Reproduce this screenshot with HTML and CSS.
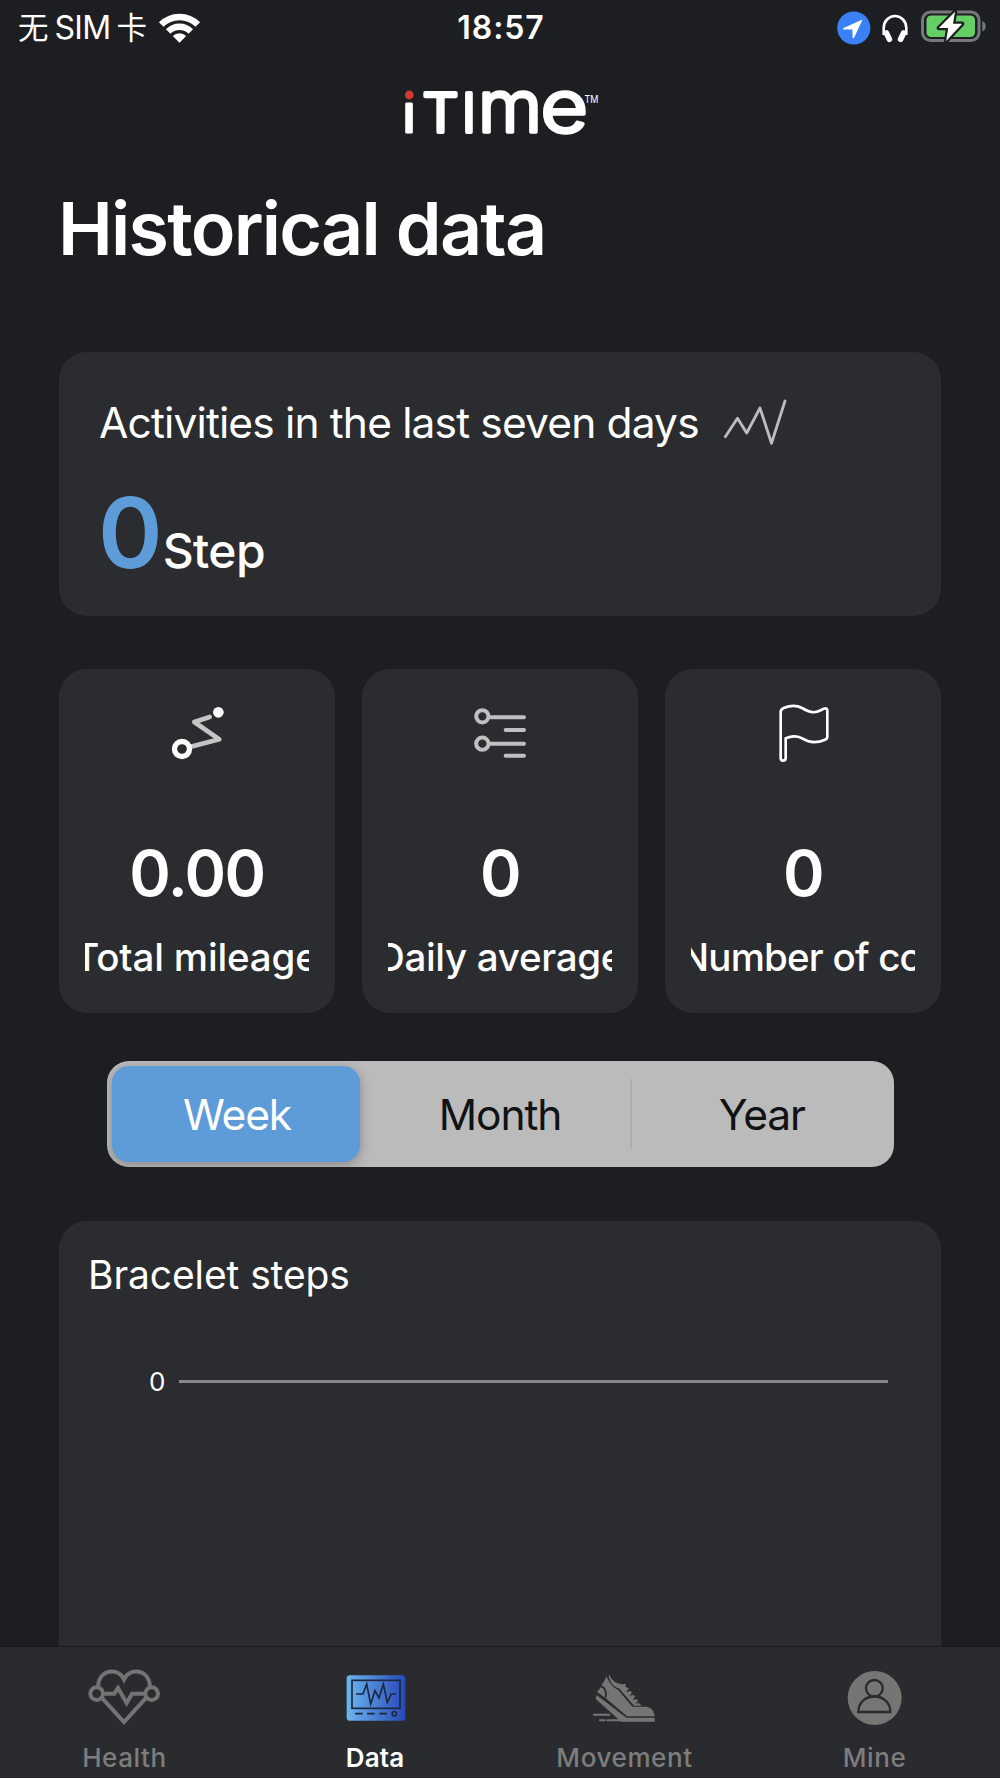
FILE: index.html
```html
<!DOCTYPE html>
<html lang="en">
<head>
<meta charset="utf-8">
<title>Historical data</title>
<link rel="stylesheet" href="styles.css">
</head>
<body>
<header class="status">
  <div class="status-left">
    <span class="carrier"><span class="cjk">无</span><span class="sim">SIM</span><span class="cjk">卡</span></span>
    <svg width="44" height="34" viewBox="157 10 44 34" fill="none" stroke="#fff" stroke-width="6.4">
      <path d="M161.2 23.6A25.8 25.8 0 0 1 197.8 23.6"/>
      <path d="M168.2 30.4A16 16 0 0 1 190.8 30.4"/>
      <path d="M179.5 41.8L172.8 35A9.6 9.6 0 0 1 186.2 35Z" fill="#fff" stroke="none"/>
    </svg>
  </div>
  <span class="time">18:57</span>
  <svg class="status-icons" width="150" height="40" viewBox="836 8 150 40">
    <circle cx="853.8" cy="28" r="16.6" fill="#3a81f6"/>
    <path d="M862.6 19.6L843 28.2Q842.6 29.4 844 29.5L852.4 29.6L852.6 37.8Q853.2 39 854.2 37.6Z" fill="#fff"/>
    <path d="M883.7 35V28A11.3 12 0 0 1 906.3 28V35" fill="none" stroke="#fff" stroke-width="2.6"/>
    <path d="M886.4 33L889.4 39.3M903.6 33L900.6 39.3" stroke="#fff" stroke-width="5.6" stroke-linecap="round"/>
    <rect x="922.5" y="12" width="56.5" height="28.5" rx="8" fill="none" stroke="#77787b" stroke-width="3"/>
    <rect x="926.5" y="15.5" width="48.5" height="21.5" rx="4.5" fill="#65cf66"/>
    <path d="M982.3 21Q985.6 22.5 985.6 26.2T982.3 31.4Z" fill="#77787b"/>
    <path d="M955 11.8L938.8 28H948.2L946.2 41L962.2 23.8H953Z" fill="#fff" stroke="#1d1e21" stroke-width="4.5" stroke-linejoin="round" paint-order="stroke"/>
  </svg>
</header>
<div class="brand">
  <svg width="200" height="56" viewBox="402 86 200 56" class="logo">
    <text x="402.7" y="132.3" font-size="52" font-weight="400" stroke-width="3">i</text>
    <circle cx="409.3" cy="95" r="6.5" fill="#1d1e21"/>
    <circle cx="409.3" cy="95" r="4.4" fill="#d23a30"/>
    <text x="422.5" y="132" font-size="53" font-weight="300" stroke-width="4" textLength="36" lengthAdjust="spacingAndGlyphs">T</text>
    <text x="462" y="132" font-size="53" font-weight="300" stroke-width="4">I</text>
    <text x="478" y="132.2" font-size="72" font-weight="300" stroke-width="3.6" textLength="64" lengthAdjust="spacingAndGlyphs">m</text>
    <text x="540.5" y="132" font-size="72" font-weight="300" stroke-width="3.6" textLength="47.5" lengthAdjust="spacingAndGlyphs">e</text>
    <text x="584.5" y="103" font-size="11" font-weight="400" stroke-width="0" textLength="14" lengthAdjust="spacingAndGlyphs">TM</text>
  </svg>
</div>
<main class="content">
  <h1 class="title">Historical data</h1>
  <section class="card summary">
    <div class="summary-head">
      <span>Activities in the last seven days</span>
      <svg width="66" height="48" viewBox="720 398 66 48" fill="none" stroke="#bdbdbe" stroke-width="2.8" stroke-linejoin="round" stroke-linecap="round">
        <path d="M723.3 436.7L735.5 418.3L744.7 433L758 408L769.5 443.3L783 401"/>
      </svg>
    </div>
    <div class="summary-value"><span class="steps">0</span><span class="unit">Step</span></div>
  </section>
  <section class="stats">
    <article class="card stat">
      <svg width="60" height="60" viewBox="350 129 180 180" fill="none">
        <path d="M478 171L432 186L507 238L418 261" stroke="#c4c4c4" stroke-width="14" stroke-linejoin="round" stroke-linecap="round"/>
        <circle cx="504" cy="157" r="16" fill="#fff"/>
        <circle cx="395" cy="267" r="22.5" stroke="#fff" stroke-width="16" fill="#2a2c30"/>
      </svg>
      <strong class="num">0.00</strong>
      <div class="stat-label mileage"><span>Total mileage</span></div>
    </article>
    <article class="card stat">
      <svg width="60" height="60" viewBox="1260 129 180 180" fill="none" stroke="#c0c0c0" stroke-width="12" stroke-linecap="round">
        <path d="M1322 172H1422M1367 210H1422M1322 251H1422M1367 287H1422"/>
        <circle cx="1297" cy="169" r="18.5"/><circle cx="1297" cy="251" r="18.5"/>
      </svg>
      <strong class="num">0</strong>
      <div class="stat-label"><span>Daily average</span></div>
    </article>
    <article class="card stat">
      <svg width="60" height="60" viewBox="819 129 180 180" fill="none" stroke="#fff" stroke-width="8" stroke-linejoin="round">
        <path d="M842 156Q842 148 851 144C870 136 888 134 906 144C930 158 944 161 964 150L972 146Q982 143 982 152V230Q982 236 975 239C950 250 930 250 908 236C890 224 872 230 857 235V294Q857 302 849.5 302T842 294Z"/>
      </svg>
      <strong class="num">0</strong>
      <div class="stat-label count"><span>Number of co</span></div>
    </article>
  </section>
  <nav class="segments">
    <span class="segment selected">Week</span>
    <span class="segment">Month</span>
    <span class="segment last">Year</span>
  </nav>
  <section class="card chart">
    <h2 class="chart-title">Bracelet steps</h2>
    <div class="axis"><span class="tick">0</span><span class="gridline"></span></div>
  </section>
</main>
<nav class="tabs">
  <a class="tab">
    <svg width="80" height="60" viewBox="255 84 240 180" fill="none" stroke="#737373" stroke-width="12">
      <path d="M294 140C296 88 354 80 372 118C390 80 448 88 450 140M307 175L372 246L437 175M313 161H343L354 144L380 189L396 161H432" stroke-miterlimit="8"/>
      <circle cx="290" cy="161" r="19"/><circle cx="455" cy="161" r="19"/>
    </svg>
    <span>Health</span>
  </a>
  <a class="tab active">
    <svg width="80" height="60" viewBox="1005 84 240 180" fill="none" stroke="#1c2940" stroke-width="5">
      <defs><linearGradient id="screen"><stop offset="0" stop-color="#6bb6ee"/><stop offset="1" stop-color="#2848b8"/></linearGradient></defs>
      <rect x="1040" y="106" width="176" height="136" rx="9" fill="url(#screen)" stroke="none"/>
      <rect x="1056" y="121" width="144" height="84"/>
      <path d="M1068 162H1089L1100 132L1112 192L1125 152L1137 174L1150 132L1162 187L1174 162H1188M1065 221H1088M1101 221H1124M1138 221H1161"/>
      <circle cx="1183" cy="221" r="6.5"/>
    </svg>
    <span>Data</span>
  </a>
  <a class="tab">
    <svg width="80" height="60" viewBox="255 84 240 180" fill="#757574">
      <path d="M320 110C328 128 339 143 354 149L397 200H440C454 203 463 213 464 229H381L300 160L318 176C325 156 317 138 304 137Z"/>
      <path d="M302 142C313 145 317 158 314 172L291 156Z"/>
      <path d="M290 165L379 233H464V245H364L287 177Z"/>
      <path d="M328 104C336 124 352 135 378 132L376 140L386 145L379 156L391 153L396 158L388 168L400 164L405 170L397 181L409 177L414 183L406 191L416 189L425 197H402L357 145C340 141 330 126 326 108Z"/>
      <path d="M282 224H328M300 241H314M322 241H370" stroke="#757574" stroke-width="6" stroke-linecap="round"/>
    </svg>
    <span>Movement</span>
  </a>
  <a class="tab">
    <svg width="80" height="60" viewBox="1005 84 240 180" fill="none" stroke="#292b2f" stroke-width="7">
      <circle cx="1124" cy="174" r="81" fill="#757574" stroke="none"/>
      <circle cx="1123" cy="145" r="25"/>
      <path d="M1075 216C1075 154 1171 154 1171 216Z"/>
    </svg>
    <span>Mine</span>
  </a>
</nav>
</body>
</html>
```
FILE: styles.css
```css
* { box-sizing: border-box; }
body {
  margin: 0;
  width: 1000px;
  height: 1778px;
  overflow: hidden;
  display: flex;
  flex-direction: column;
  background: #1d1e21;
  color: #fff;
  font-family: Inter, "Noto Sans CJK SC", sans-serif;
}
svg { display: block; flex: none; }
.status {
  height: 55px;
  flex: none;
  display: grid;
  grid-template-columns: 1fr auto 1fr;
  align-items: center;
  padding: 0 14px 0 18px;
}
.status-left { display: flex; align-items: center; gap: 10px; }
.carrier { display: flex; align-items: center; font-size: 32px; line-height: 40px; gap: 5px; }
.cjk { font-family: "Noto Sans CJK SC", sans-serif; font-size: 30.5px; margin-top: -3px; }
.sim { letter-spacing: -.7px; margin: 1px 1px 0 1px; }
.time { font-size: 32px; font-weight: 600; line-height: 40px; letter-spacing: .9px; margin-right: 2px; }
.status-icons { justify-self: end; }
.brand { height: 133px; flex: none; padding: 31px 0 0 402px; }
.logo { overflow: visible; }
.logo text { font-family: Inter, sans-serif; fill: #fff; stroke: #fff; stroke-linejoin: round; }
.content { flex: 1; min-height: 0; overflow: hidden; padding: 0 59px; }
.title { margin: 1px 0 83px; font-size: 73.5px; font-weight: 600; line-height: 80px; letter-spacing: -1.75px; text-indent: -1px; }
.card { background: #2a2c30; border-radius: 28px; }
.summary { height: 264px; padding: 46px 41px 0 40px; }
.summary-head { display: flex; align-items: center; gap: 23px; height: 48px; font-size: 42.5px; letter-spacing: -.85px; }
.summary-value { display: flex; align-items: baseline; line-height: 100px; margin: 37px 0 0 -1px; }
.steps { font-size: 98px; font-weight: 600; color: #5e9bd9; }
.unit { font-size: 48px; font-weight: 500; letter-spacing: -.6px; }
.stats { display: grid; grid-template-columns: repeat(3, 1fr); gap: 27px; margin-top: 53px; }
.stat { height: 344px; padding: 34px 26px 0; display: flex; flex-direction: column; align-items: center; }
.num { font-size: 63px; font-weight: 600; line-height: 70px; margin-top: 75px; letter-spacing: -1.5px; }
.stat-label {
  width: 224px;
  margin-top: 24px;
  display: flex;
  justify-content: center;
  overflow: hidden;
  white-space: nowrap;
  font-size: 38.5px;
  font-weight: 500;
  line-height: 50px;
  letter-spacing: -.3px;
}
.mileage { letter-spacing: -.15px; padding-right: 2px; }
.count { letter-spacing: -.8px; padding-right: 4px; }
.segments {
  display: grid;
  grid-template-columns: repeat(3, 1fr);
  width: 787px;
  height: 106px;
  margin: 48px 0 0 47.5px;
  background: #bbb;
  border-radius: 22px;
  overflow: hidden;
  color: #111214;
  font-size: 42.5px;
  letter-spacing: -1.1px;
}
.segment { display: flex; align-items: center; justify-content: center; }
.selected { width: 248px; margin: 5px; padding-left: 3px; background: #5e9bd9; color: #fff; border-radius: 17px; box-shadow: 0 3px 12px rgba(0, 0, 0, .28); }
.last { margin-left: -1px; background: linear-gradient(#adadad, #adadad) 0 50% / 2px 70px no-repeat; }
.chart { height: 600px; margin-top: 54px; padding: 29px 31px 0 29px; }
.chart-title { margin: 0; font-size: 39px; font-weight: 400; line-height: 50px; letter-spacing: -.1px; }
.axis { display: flex; align-items: center; height: 40px; margin-top: 61px; padding: 0 22px 0 61px; }
.tick { font-size: 26px; width: 30px; }
.gridline { flex: 1; height: 3px; background: #88888b; }
.tabs {
  flex: none;
  height: 132px;
  display: grid;
  grid-template-columns: repeat(4, 1fr);
  background: #292b2f;
  border-top: 1px solid #1b1c1f;
  border-bottom: 1px solid #1f2023;
  color: #7d7d7e;
  font-size: 26px;
  font-weight: 500;
  letter-spacing: .6px;
}
.tab { display: flex; flex-direction: column; align-items: center; padding-top: 21px; line-height: 32px; }
.tab span { margin: 14px 1px 0 0; }
.active { color: #fff; font-weight: 600; letter-spacing: .1px; }
.active span { margin-right: 0; }
```
